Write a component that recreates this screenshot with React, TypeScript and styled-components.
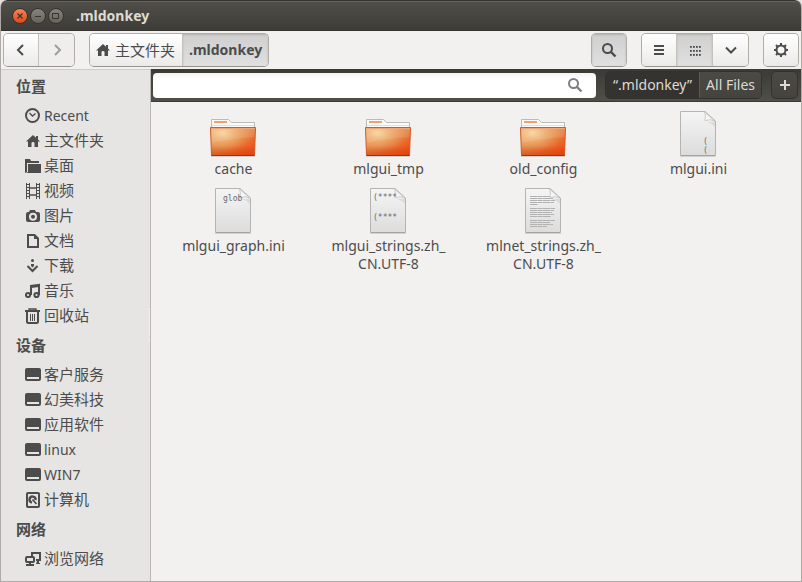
import React from "react";
import styled, { createGlobalStyle, css } from "styled-components";

const GlobalStyle = createGlobalStyle`
  * { box-sizing: border-box; }
  body {
    margin: 0;
    background: #e4e2e0;
    color: #4c4c4c;
    font-family: "Noto Sans", "Noto Sans CJK SC", sans-serif;
    font-size: 14px;
  }
  button, input { font: inherit; color: inherit; margin: 0; }
  button { cursor: default; }
`;

const Window = styled.div`
  display: flex;
  flex-direction: column;
  min-height: 100vh;
  background: #f2f1f0;
  border: solid #aeaaa5;
  border-width: 0 1px 1px;
  border-radius: 7px 7px 0 0;
  overflow: hidden;
`;

const TitleBar = styled.header`
  display: flex;
  align-items: center;
  gap: 2px;
  height: 31px;
  margin: 0 -1px;
  padding: 1px 11px 0;
  background: linear-gradient(#504f49, #3d3c38);
  border: 1px solid #35342f;
  border-radius: 7px 7px 0 0;
  box-shadow: inset 0 1px #66645d;
`;

const WindowButton = styled.button<{ $close?: boolean }>`
  display: grid;
  place-items: center;
  width: 16px;
  height: 16px;
  padding: 0;
  border: 1px solid #34332e;
  border-radius: 50%;
  color: #37362f;
  background: ${(p) =>
    p.$close ? "linear-gradient(#f8815a, #df4a16)" : "linear-gradient(#85837b, #65635c)"};
`;

const Title = styled.h1`
  margin: 0 0 0 10px;
  font-size: 14px;
  line-height: 20px;
  font-weight: 700;
  color: #dfdbd2;
`;

const Toolbar = styled.div`
  display: flex;
  align-items: center;
  gap: 14px;
  height: 38px;
  padding: 0 2px;
  background: #f2f1f0;
`;

const Spacer = styled.div`
  flex: 1;
`;

const Group = styled.div`
  display: flex;
  height: 34px;
  border: 1px solid #b0aca8;
  border-bottom-color: #979490;
  border-radius: 5px;
  overflow: hidden;
`;

const ToolButton = styled.button<{ $on?: boolean; $dim?: boolean; $text?: boolean }>`
  display: flex;
  align-items: center;
  justify-content: center;
  gap: 4px;
  min-width: 34px;
  padding: ${(p) => (p.$text ? "0 7px 0 5px" : "0")};
  border: 0;
  background: ${(p) =>
    p.$on
      ? "linear-gradient(#cfcfcf, #e0e0e0)"
      : p.$dim
        ? "#efeeed"
        : "linear-gradient(#ffffff, #ebeae9)"};
  box-shadow: ${(p) => (p.$on ? "inset 0 1px 2px #b5b3b0" : "none")};
  color: ${(p) => (p.$dim ? "#a09d99" : "#4c4c4c")};
  & + & {
    min-width: 36px;
    border-left: 1px solid #c5c2be;
    ${(p) => p.$text && "padding: 0 6px;"}
  }
`;

const PathName = styled.span<{ $strong?: boolean }>`
  font-size: ${(p) => (p.$strong ? "14px" : "15px")};
  line-height: 18px;
  font-weight: ${(p) => (p.$strong ? 700 : 400)};
  white-space: nowrap;
`;

const Body = styled.div`
  display: flex;
  flex: 1;
`;

const Sidebar = styled.nav`
  position: relative;
  flex: 0 0 150px;
  background: #e6e5e3;
  border-right: 1px solid #bab6b2;
  box-shadow: inset 0 1px #cfccc8;
`;

const Grip = styled.span`
  position: absolute;
  right: 0;
  top: calc(50% - 17px);
  height: 34px;
  border-right: 1px dotted #fafafa;
`;

const SectionTitle = styled.h2`
  margin: 0;
  padding-left: 15px;
  font-size: 15px;
  line-height: 34px;
  font-weight: 700;
`;

const PlaceList = styled.ul`
  margin: 0;
  padding: 0;
  list-style: none;
`;

const Place = styled.a<{ $latin: boolean }>`
  display: flex;
  align-items: center;
  gap: 3px;
  height: 25px;
  padding-left: 24px;
  font-size: ${(p) => (p.$latin ? "14px" : "15px")};
  line-height: 25px;
  color: inherit;
  text-decoration: none;
  white-space: nowrap;
`;

const Main = styled.main`
  display: flex;
  flex: 1;
  min-width: 0;
  flex-direction: column;
`;

const SearchBar = styled.div`
  display: flex;
  align-items: center;
  height: 33px;
  padding: 0 3px 0 2px;
  background: linear-gradient(#3b3a36, #504f48);
  border-bottom: 1px solid #3a3935;
`;

const SearchField = styled.label`
  display: flex;
  flex: 1;
  align-items: center;
  height: 25px;
  min-width: 0;
  padding-right: 13px;
  border-radius: 4px;
  background: linear-gradient(#f4f4f4, #ffffff 6px);
  color: #7f7f7f;
`;

const SearchInput = styled.input`
  flex: 1;
  min-width: 0;
  height: 25px;
  padding: 0 6px;
  border: 0;
  outline: 0;
  background: none;
  color: #4c4c4c;
`;

const ScopeGroup = styled.div`
  display: flex;
  height: 28px;
  margin: 0 9px;
  border: 1px solid #33322e;
  border-radius: 5px;
  overflow: hidden;
`;

const darkButton = css`
  padding: 0;
  background: linear-gradient(#4b4a44, #44433e);
  color: #dfdbd2;
`;

const ScopeButton = styled.button<{ $on?: boolean }>`
  ${darkButton}
  padding: 0 6px;
  border: 0;
  line-height: 26px;
  white-space: nowrap;
  ${(p) => p.$on && "background: #34332f; padding: 0 7px;"}
  & + & {
    border-left: 1px solid #5b5a53;
  }
`;

const AddButton = styled.button`
  ${darkButton}
  display: grid;
  place-items: center;
  width: 27px;
  height: 28px;
  border: 1px solid #33322e;
  border-radius: 5px;
`;

const Files = styled.ul`
  display: grid;
  flex: 1;
  grid-template-columns: repeat(auto-fill, 155px);
  align-content: start;
  gap: 9px 0;
  margin: 0;
  padding: 8px 5px;
  list-style: none;
  background: #f2f1f0;
`;

const FileItem = styled.li`
  display: flex;
  flex-direction: column;
  align-items: center;
  min-height: 68px;
`;

const FileName = styled.span`
  width: 140px;
  margin-top: 2px;
  line-height: 18px;
  text-align: center;
`;

const Glyph = styled.svg`
  display: block;
  flex: none;
  fill: none;
  stroke: currentColor;
  stroke-width: 2;
`;

const Solid = styled(Glyph)`
  fill: currentColor;
  stroke: none;
`;

const Artwork = styled.svg`
  display: block;
  flex: none;
`;

const iconBox = { width: 16, height: 16, viewBox: "0 0 16 16", "aria-hidden": true } as const;

const HomeIcon = () => (
  <Solid {...iconBox}>
    <path d="M8 2 L1 8.5 H3 V14 H6.5 V10 Q6.5 9 8 9 Q9.5 9 9.5 10 V14 H13 V8.5 H15 L13 6.5 V3 H11 V4.7 Z" />
  </Solid>
);

const ClockIcon = () => (
  <Glyph {...iconBox}>
    <circle cx="7.5" cy="7.5" r="6.5" />
    <path d="M4.5 5 L7.5 8 L10.5 5.5" strokeWidth="1.3" />
  </Glyph>
);

const DesktopIcon = () => (
  <Solid {...iconBox}>
    <path d="M0 1 H5 L6 3 H14 V5 H2 V14 L0 15 Z" />
    <path d="M3 6 H16 V15 H1 L3 14 Z" />
  </Solid>
);

const VideoIcon = () => (
  <Glyph {...iconBox}>
    <path d="M1.5 0V16M4.5 0V16M11.5 0V16M14.5 0V16" strokeWidth="1" />
    <path d="M3 1V16M13 1V16" strokeDasharray="1 2" />
    <path d="M4.5 5H11.5M4.5 12H11.5" strokeWidth="1.3" />
  </Glyph>
);

const CameraIcon = () => (
  <Solid {...iconBox}>
    <path
      fillRule="evenodd"
      d="M3 4 H4 L5 2 H10 L11 4 H13 Q15 4 15 6 V12 Q15 14 13 14 H3 Q1 14 1 12 V6 Q1 4 3 4Z M8 4.7 A4 4 0 1 0 8 12.7 A4 4 0 1 0 8 4.7Z"
    />
    <circle cx="8" cy="8.7" r="2" />
  </Solid>
);

const DocumentIcon = () => (
  <Glyph {...iconBox}>
    <path d="M3 2 H9.5 L13 5.5 V14 H3 Z" />
    <path d="M9 2V6H13Z" fill="currentColor" stroke="none" />
  </Glyph>
);

const DownloadIcon = () => (
  <Glyph {...iconBox}>
    <path d="M2.5 8 L7.5 13 L12.5 8" />
    <circle cx="7.5" cy="2.5" r="1.5" fill="currentColor" stroke="none" />
    <path d="M6 6H9V8L7.5 9.5L6 8Z" fill="currentColor" stroke="none" />
  </Glyph>
);

const MusicIcon = () => (
  <Glyph {...iconBox}>
    <circle cx="3" cy="12" r="2.1" />
    <circle cx="11.5" cy="12" r="2.1" />
    <path d="M6 12 V3 L14 2 V12" />
    <path d="M6 4 L14 3" />
  </Glyph>
);

const TrashIcon = () => (
  <Glyph {...iconBox}>
    <path d="M0 3H15" />
    <path d="M4 2V1H11V2" strokeWidth="1.3" />
    <path d="M2 4V13.5Q2 15 3.5 15H11.5Q13 15 13 13.5V4" />
    <path d="M5.5 6V13M7.5 6V13M9.5 6V13" strokeWidth="1" />
  </Glyph>
);

const DriveIcon = () => (
  <Solid {...iconBox}>
    <path fillRule="evenodd" d="M2 1H14Q16 1 16 3V12Q16 14 14 14H2Q0 14 0 12V3Q0 1 2 1ZM2 10V12H14V10Z" />
  </Solid>
);

const DiskIcon = () => (
  <Glyph {...iconBox}>
    <rect x="2" y="1" width="12" height="14" rx="1" />
    <path d="M7 10.5 A3 3 0 1 1 10.5 8" strokeWidth="2.4" />
    <path d="M7.5 7.5 L11.5 12" strokeWidth="1.8" />
  </Glyph>
);

const NetworkIcon = () => (
  <Glyph {...iconBox}>
    <path d="M7 5 V2 H15 V9 H11" />
    <rect x="1" y="6" width="8" height="5" rx="1" />
    <path d="M4 11H6V13H9V15H1V13H4ZM12 10H14V12H15V13H11Z" fill="currentColor" stroke="none" />
  </Glyph>
);

const SearchIcon = () => (
  <Glyph {...iconBox}>
    <circle cx="6.5" cy="6.5" r="4.5" />
    <path d="M9.5 9.5 L14.5 14.5" strokeWidth="2.4" />
  </Glyph>
);

const GearIcon = () => (
  <Glyph {...iconBox}>
    <circle cx="8" cy="8" r="4.5" />
    <path
      d="M8 1V4M8 12V15M1 8H4M12 8H15M3 3L5.2 5.2M10.8 10.8L13 13M13 3L10.8 5.2M5.2 10.8L3 13"
      strokeWidth="2"
    />
  </Glyph>
);

const DotsIcon = () => (
  <Solid {...iconBox}>
    {[4, 8, 12].flatMap((y) =>
      [3, 6, 9, 12].map((x) => (
        <rect key={`${x}-${y}`} x={x} y={y} width="1.8" height="1.8" />
      ))
    )}
  </Solid>
);

const StrokeIcon = ({ d }: { d: string }) => (
  <Glyph {...iconBox}>
    <path d={d} />
  </Glyph>
);

const FolderArt = () => (
  <Artwork width="47" height="48" viewBox="0 0 47 48" aria-hidden="true">
    <defs>
      <linearGradient id="folderFront" x1="0" y1="0" x2="1" y2="1">
        <stop offset="0" stopColor="#e8a15c" />
        <stop offset="0.5" stopColor="#e28443" />
        <stop offset="0.85" stopColor="#f0521a" />
        <stop offset="1" stopColor="#e04814" />
      </linearGradient>
      <radialGradient id="folderGlow" cx="0.27" cy="0.2" r="0.7">
        <stop offset="0" stopColor="#f7d59d" />
        <stop offset="1" stopColor="#f0a060" stopOpacity="0" />
      </radialGradient>
      <linearGradient id="folderShade" x1="0" y1="0" x2="0" y2="1">
        <stop offset="0.65" stopColor="#d04010" stopOpacity="0" />
        <stop offset="1" stopColor="#d04010" stopOpacity="0.6" />
      </linearGradient>
    </defs>
    <path d="M1 46.5H45" stroke="#d2cfcc" />
    <path d="M1.5 28V9.5H18.5L21.5 12.5H44.5V28Z" fill="#fafafa" stroke="#bdbab7" />
    <rect x="4" y="11" width="13" height="2" fill="#f0a070" />
    <path d="M2 15.5H44" stroke="#e1dfdd" />
    <path d="M0.5 17.5H45.5L44.5 45.5H1.5Z" fill="url(#folderFront)" />
    <path d="M0.5 17.5H45.5L44.5 45.5H1.5Z" fill="url(#folderGlow)" />
    <path d="M1 18H45V27Q24 28 1 33Z" fill="#fff" opacity="0.1" />
    <path d="M0.5 17.5H45.5L44.5 45.5H1.5Z" fill="url(#folderShade)" stroke="#cf5a2a" />
    <path d="M1 18.5H45" stroke="#f3a675" />
    <path d="M1.5 45.5H44.5" stroke="#a92e0d" />
  </Artwork>
);

type Preview = "brackets" | "glob" | "stars" | "lines";

const ThumbText = styled.text`
  font-family: "DejaVu Sans Mono", monospace;
  font-size: 8px;
  fill: #64686c;
`;

const LINES = [
  [9, 25], [11, 23], [13, 25], [15, 24], [17, 8],
  [21, 25], [23, 24], [25, 22], [27, 24], [29, 21],
  [33, 25], [35, 20], [37, 23], [39, 17],
];

const PageArt = ({ preview }: { preview: Preview }) => (
  <Artwork width="47" height="48" viewBox="0 0 47 48" aria-hidden="true">
    <defs>
      <linearGradient id="pageFill" x1="0" y1="0" x2="0" y2="1">
        <stop offset="0" stopColor="#f5f5f5" />
        <stop offset="1" stopColor="#dcdcdc" />
      </linearGradient>
      <linearGradient id="curlFill" x1="0" y1="1" x2="0.8" y2="0.2">
        <stop offset="0" stopColor="#ffffff" />
        <stop offset="0.5" stopColor="#f4f4f4" />
        <stop offset="1" stopColor="#a9a9a9" />
      </linearGradient>
    </defs>
    <path d="M5 46.5H41" stroke="#d3d1cf" />
    <path d="M5.5 1.5H30L40.5 11V45.5H5.5Z" fill="url(#pageFill)" stroke="#b4b4b4" />
    <path d="M6 45.5H40" stroke="#a3a3a3" />
    <path d="M27 12L40 12V17Q34 11 27 12Z" fill="#cfcfcf" opacity="0.6" />
    {preview === "lines" &&
      LINES.map(([y, w]) => (
        <path key={y} d={`M10 ${y + 0.5}h${w}`} stroke="#b2b2b2" strokeDasharray="7.6 0.4 4.7 0.3" />
      ))}
    <path d="M29.5 1.5Q31 6 30 10.5Q36 8.5 40.5 11.5Z" fill="url(#curlFill)" stroke="#b9b9b9" strokeWidth="0.7" />
    {preview === "brackets" && (
      <>
        <ThumbText x="28" y="34">(</ThumbText>
        <ThumbText x="28" y="43">(</ThumbText>
      </>
    )}
    {preview === "glob" && <ThumbText x="13" y="14">glob</ThumbText>}
    {preview === "stars" && (
      <>
        <ThumbText x="8" y="13">(****</ThumbText>
        <ThumbText x="8" y="33">(****</ThumbText>
      </>
    )}
  </Artwork>
);

type PlaceEntry = { name: string; icon: React.ReactNode };

const sections: { title: string; places: PlaceEntry[] }[] = [
  {
    title: "位置",
    places: [
      { name: "Recent", icon: <ClockIcon /> },
      { name: "主文件夹", icon: <HomeIcon /> },
      { name: "桌面", icon: <DesktopIcon /> },
      { name: "视频", icon: <VideoIcon /> },
      { name: "图片", icon: <CameraIcon /> },
      { name: "文档", icon: <DocumentIcon /> },
      { name: "下载", icon: <DownloadIcon /> },
      { name: "音乐", icon: <MusicIcon /> },
      { name: "回收站", icon: <TrashIcon /> },
    ],
  },
  {
    title: "设备",
    places: [
      { name: "客户服务", icon: <DriveIcon /> },
      { name: "幻美科技", icon: <DriveIcon /> },
      { name: "应用软件", icon: <DriveIcon /> },
      { name: "linux", icon: <DriveIcon /> },
      { name: "WIN7", icon: <DriveIcon /> },
      { name: "计算机", icon: <DiskIcon /> },
    ],
  },
  { title: "网络", places: [{ name: "浏览网络", icon: <NetworkIcon /> }] },
];

const files: { name: string[]; preview?: Preview }[] = [
  { name: ["cache"] },
  { name: ["mlgui_tmp"] },
  { name: ["old_config"] },
  { name: ["mlgui.ini"], preview: "brackets" },
  { name: ["mlgui_graph.ini"], preview: "glob" },
  { name: ["mlgui_strings.zh_", "CN.UTF-8"], preview: "stars" },
  { name: ["mlnet_strings.zh_", "CN.UTF-8"], preview: "lines" },
];

export default function App() {
  return (
    <>
      <GlobalStyle />
      <Window>
        <TitleBar>
          <WindowButton $close aria-label="Close">
            <svg width="8" height="8" viewBox="0 0 8 8" stroke="currentColor" strokeWidth="1.3">
              <path d="M1.5 1.5L6.5 6.5M6.5 1.5L1.5 6.5" />
            </svg>
          </WindowButton>
          <WindowButton aria-label="Minimize">
            <svg width="8" height="8" viewBox="0 0 8 8" stroke="currentColor">
              <path d="M1 4.5H7" />
            </svg>
          </WindowButton>
          <WindowButton aria-label="Maximize">
            <svg width="8" height="8" viewBox="0 0 8 8" stroke="currentColor" fill="none">
              <rect x="0.5" y="1.5" width="6" height="5" />
            </svg>
          </WindowButton>
          <Title>.mldonkey</Title>
        </TitleBar>

        <Toolbar>
          <Group>
            <ToolButton aria-label="Back">
              <StrokeIcon d="M10 3L5 8L10 13" />
            </ToolButton>
            <ToolButton $dim disabled aria-label="Forward">
              <StrokeIcon d="M6 3L11 8L6 13" />
            </ToolButton>
          </Group>
          <Group>
            <ToolButton $text>
              <HomeIcon />
              <PathName>主文件夹</PathName>
            </ToolButton>
            <ToolButton $text $on>
              <PathName $strong>.mldonkey</PathName>
            </ToolButton>
          </Group>
          <Spacer />
          <Group>
            <ToolButton $on aria-label="Search">
              <SearchIcon />
            </ToolButton>
          </Group>
          <Group>
            <ToolButton aria-label="List view">
              <StrokeIcon d="M3 4H13M3 8H13M3 12H13" />
            </ToolButton>
            <ToolButton $on aria-label="Icon view">
              <DotsIcon />
            </ToolButton>
            <ToolButton aria-label="View options">
              <StrokeIcon d="M3 5.5L8 10.5L13 5.5" />
            </ToolButton>
          </Group>
          <Group>
            <ToolButton aria-label="Settings">
              <GearIcon />
            </ToolButton>
          </Group>
        </Toolbar>

        <Body>
          <Sidebar>
            {sections.map((section) => (
              <section key={section.title}>
                <SectionTitle>{section.title}</SectionTitle>
                <PlaceList>
                  {section.places.map((place) => (
                    <li key={place.name}>
                      <Place href="#" $latin={/^\w+$/.test(place.name)}>
                        {place.icon}
                        {place.name}
                      </Place>
                    </li>
                  ))}
                </PlaceList>
              </section>
            ))}
            <Grip />
          </Sidebar>

          <Main>
            <SearchBar>
              <SearchField>
                <SearchInput type="text" aria-label="Search files" />
                <SearchIcon />
              </SearchField>
              <ScopeGroup>
                <ScopeButton $on>“.mldonkey”</ScopeButton>
                <ScopeButton>All Files</ScopeButton>
              </ScopeGroup>
              <AddButton aria-label="Add filter">
                <StrokeIcon d="M8 3V13M3 8H13" />
              </AddButton>
            </SearchBar>
            <Files>
              {files.map((file) => (
                <FileItem key={file.name.join("")}>
                  {file.preview ? <PageArt preview={file.preview} /> : <FolderArt />}
                  <FileName>
                    {file.name[0]}
                    {file.name[1] && (
                      <>
                        <wbr />
                        {file.name[1]}
                      </>
                    )}
                  </FileName>
                </FileItem>
              ))}
            </Files>
          </Main>
        </Body>
      </Window>
    </>
  );
}
